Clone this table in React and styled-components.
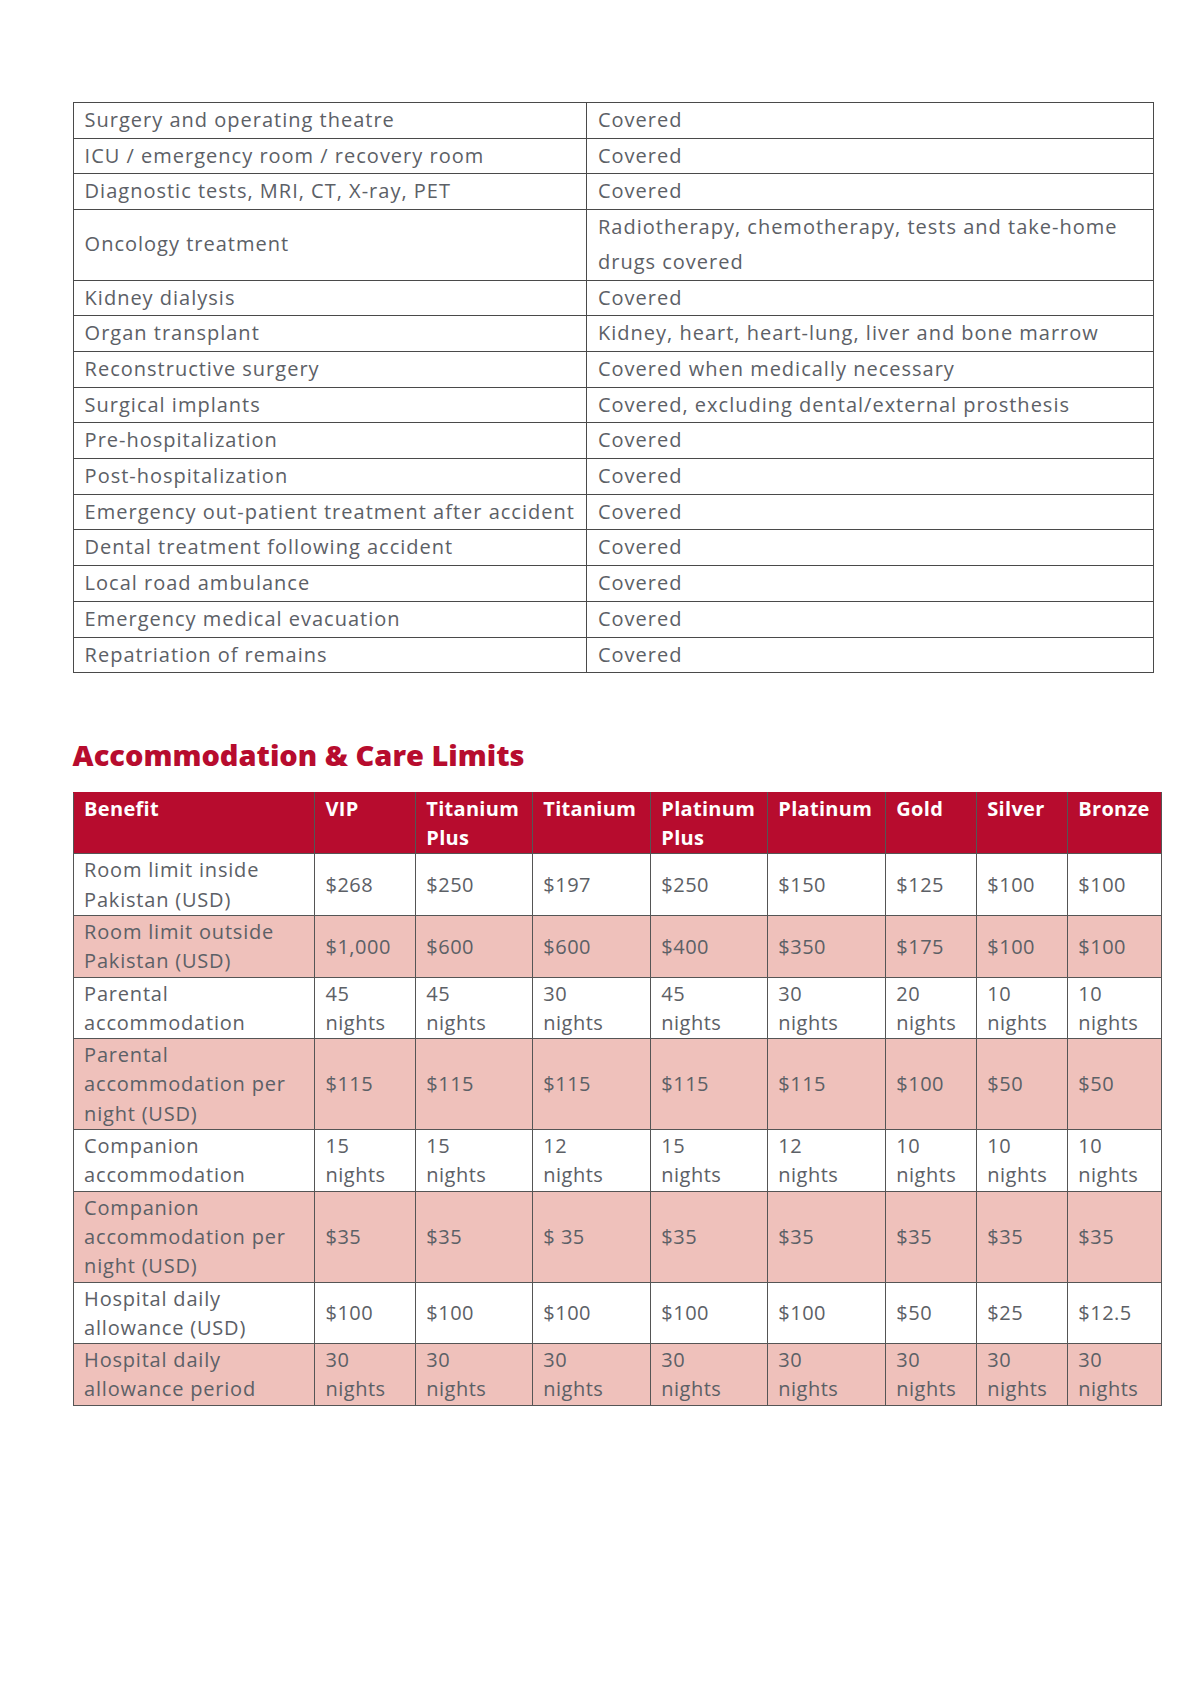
import React from "react";
import styled, { createGlobalStyle } from "styled-components";

const GlobalStyle = createGlobalStyle`
  html, body { margin: 0; padding: 0; background: #ffffff; }
  body {
    font-family: "Open Sans", "Noto Sans", "DejaVu Sans", sans-serif;
    color: #5c6066;
  }
  * { box-sizing: border-box; }
`;

const Page = styled.main`
  width: 1200px;
  min-height: 1698px;
  padding: 102px 0 0 72.6px;
  display: flex;
  flex-direction: column;
  align-items: flex-start;
`;

const CoverTable = styled.table`
  width: 1080px;
  border-collapse: collapse;
  table-layout: fixed;
  border: 1px solid #4a4a4a;
`;

const CoverCell = styled.td`
  border: 1px solid #4a4a4a;
  padding: 0 11px;
  font-size: 20px;
  line-height: 34.7px;
  letter-spacing: 1px;
  color: #5c6066;
  vertical-align: middle;
`;

const Heading = styled.h2`
  margin: 62px 0 16.5px;
  font-size: 29px;
  line-height: 40px;
  font-weight: 800;
  color: #b70c2e;
  letter-spacing: 0;
`;

const LimitTable = styled.table`
  width: 1088.4px;
  border-collapse: collapse;
  table-layout: fixed;
  border: 1px solid #555555;
`;

const HeadCell = styled.th`
  background: #b70c2e;
  color: #ffffff;
  font-weight: 700;
  font-size: 20px;
  line-height: 29.3px;
  padding: 1px 8px 1px 10.5px;
  text-align: left;
  vertical-align: top;
  border: 1px solid #555555;
  border-top-color: #b70c2e;
  letter-spacing: 0.3px;
`;

const Row = styled.tr`
  background: ${(p) => (p.$shaded ? "#efc1bb" : "#ffffff")};
`;

const DataCell = styled.td`
  font-size: 20px;
  line-height: 29.3px;
  padding: ${(p) => (p.$label ? "1px 8px 1px 10.5px" : "1px 20px 1px 10.5px")};
  color: #5c6066;
  vertical-align: middle;
  border: 1px solid #555555;
  letter-spacing: ${(p) => (p.$label ? "0.8px" : "0.5px")};
`;

const coverage = [
  ["Surgery and operating theatre", "Covered"],
  ["ICU / emergency room / recovery room", "Covered"],
  ["Diagnostic tests, MRI, CT, X-ray, PET", "Covered"],
  ["Oncology treatment", "Radiotherapy, chemotherapy, tests and take-home drugs covered"],
  ["Kidney dialysis", "Covered"],
  ["Organ transplant", "Kidney, heart, heart-lung, liver and bone marrow"],
  ["Reconstructive surgery", "Covered when medically necessary"],
  ["Surgical implants", "Covered, excluding dental/external prosthesis"],
  ["Pre-hospitalization", "Covered"],
  ["Post-hospitalization", "Covered"],
  ["Emergency out-patient treatment after accident", "Covered"],
  ["Dental treatment following accident", "Covered"],
  ["Local road ambulance", "Covered"],
  ["Emergency medical evacuation", "Covered"],
  ["Repatriation of remains", "Covered"],
];

const headers = ["Benefit", "VIP", "Titanium Plus", "Titanium", "Platinum Plus", "Platinum", "Gold", "Silver", "Bronze"];
const colWidths = [241.4, 100.8, 117, 118, 117, 118, 91, 91, 94];

const limits = [
  ["Room limit inside Pakistan (USD)", "$268", "$250", "$197", "$250", "$150", "$125", "$100", "$100"],
  ["Room limit outside Pakistan (USD)", "$1,000", "$600", "$600", "$400", "$350", "$175", "$100", "$100"],
  ["Parental accommodation", "45 nights", "45 nights", "30 nights", "45 nights", "30 nights", "20 nights", "10 nights", "10 nights"],
  ["Parental accommodation per night (USD)", "$115", "$115", "$115", "$115", "$115", "$100", "$50", "$50"],
  ["Companion accommodation", "15 nights", "15 nights", "12 nights", "15 nights", "12 nights", "10 nights", "10 nights", "10 nights"],
  ["Companion accommodation per night (USD)", "$35", "$35", "$ 35", "$35", "$35", "$35", "$35", "$35"],
  ["Hospital daily allowance (USD)", "$100", "$100", "$100", "$100", "$100", "$50", "$25", "$12.5"],
  ["Hospital daily allowance period", "30 nights", "30 nights", "30 nights", "30 nights", "30 nights", "30 nights", "30 nights", "30 nights"],
];

export default function App() {
  return (
    <>
      <GlobalStyle />
      <Page>
        <CoverTable>
          <colgroup>
            <col style={{ width: 513.4 }} />
            <col style={{ width: 566.6 }} />
          </colgroup>
          <tbody>
            {coverage.map(([benefit, value]) => (
              <tr key={benefit}>
                <CoverCell>{benefit}</CoverCell>
                <CoverCell>{value}</CoverCell>
              </tr>
            ))}
          </tbody>
        </CoverTable>

        <Heading>Accommodation &amp; Care Limits</Heading>

        <LimitTable>
          <colgroup>
            {colWidths.map((w, i) => (
              <col key={i} style={{ width: w }} />
            ))}
          </colgroup>
          <thead>
            <tr>
              {headers.map((h) => (
                <HeadCell key={h}>{h}</HeadCell>
              ))}
            </tr>
          </thead>
          <tbody>
            {limits.map((row, i) => (
              <Row key={row[0]} $shaded={i % 2 === 1}>
                {row.map((cell, j) => (
                  <DataCell key={j} $label={j === 0}>
                    {cell}
                  </DataCell>
                ))}
              </Row>
            ))}
          </tbody>
        </LimitTable>
      </Page>
    </>
  );
}
